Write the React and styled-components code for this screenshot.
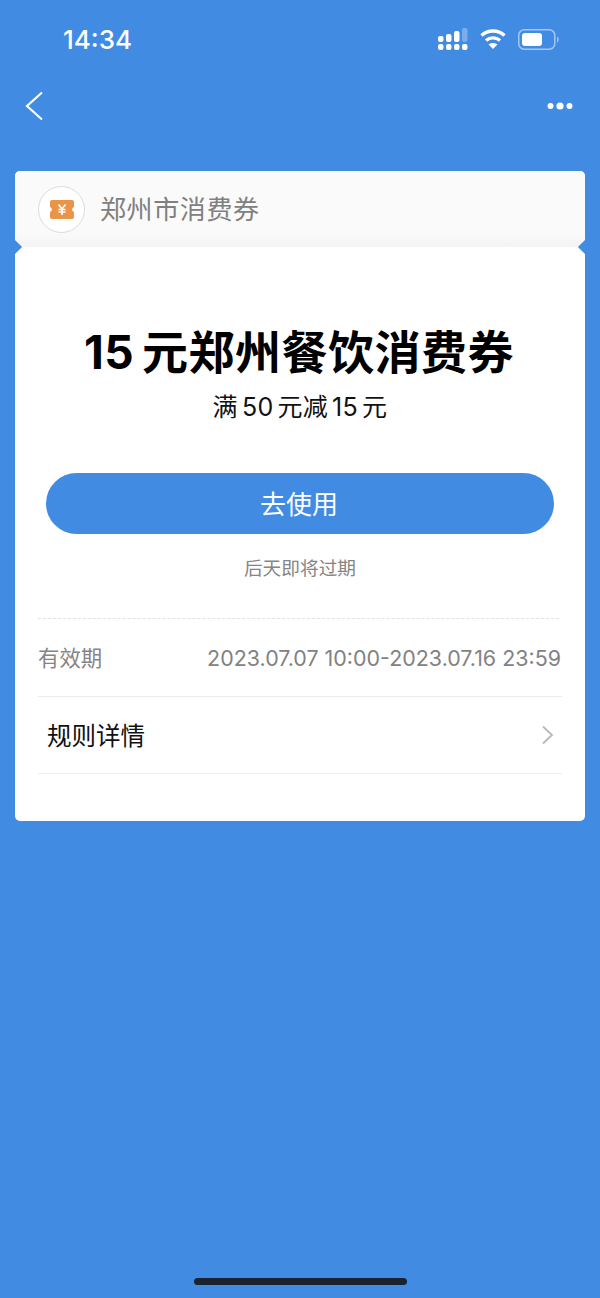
import styled, { createGlobalStyle } from "styled-components";

const GlobalStyle = createGlobalStyle`
  html, body {
    margin: 0;
    padding: 0;
    background: #418be3;
  }
  * {
    box-sizing: border-box;
  }
`;

const cjk = `"Noto Sans CJK SC", "Noto Sans", sans-serif`;
const latin = `Inter, "Noto Sans CJK SC", sans-serif`;

const Page = styled.div`
  position: relative;
  width: 600px;
  height: 1298px;
  overflow: hidden;
  background: #418be3;
  font-family: ${cjk};
`;

const StatusBar = styled.div`
  display: flex;
  align-items: center;
  justify-content: space-between;
  height: 78px;
  padding: 0 41px 0 63px;
`;

const Clock = styled.div`
  font-family: ${latin};
  font-size: 26px;
  font-weight: 500;
  color: #fff;
`;

const StatusIcons = styled.div`
  display: flex;
  align-items: center;
  gap: 12px;
`;

const NavBar = styled.div`
  display: flex;
  align-items: center;
  justify-content: space-between;
  height: 56px;
  padding: 0 27px 0 25px;
`;

const Card = styled.div`
  margin: 37px 15px 0;
  border-radius: 5px;
  overflow: visible;
  background: #fff;
`;

const CardHeader = styled.div`
  position: relative;
  display: flex;
  align-items: center;
  gap: 15px;
  height: 76px;
  padding: 0 23px;
  border-radius: 5px 5px 0 0;
  background: linear-gradient(#fafafa 80%, #f4f4f4);
`;

const Notch = styled.span`
  position: absolute;
  bottom: -5px;
  ${({ $side }) => $side}: -5px;
  width: 10px;
  height: 10px;
  background: #418be3;
  transform: rotate(45deg);
`;

const IssuerBadge = styled.div`
  display: flex;
  align-items: center;
  justify-content: center;
  width: 47px;
  height: 47px;
  border: 1px solid #dcdcdc;
  border-radius: 50%;
  background: #fff;
`;

const IssuerName = styled.div`
  padding-bottom: 2px;
  font-size: 26px;
  line-height: 1;
  color: #808080;
  letter-spacing: 0.6px;
`;

const CardBody = styled.div`
  padding: 0 23px 47px;
`;

const Headline = styled.h1`
  margin: 76px 0 0;
  padding-right: 2px;
  font-family: ${cjk};
  font-size: 46px;
  line-height: 52px;
  font-weight: 700;
  color: #000;
  letter-spacing: 0.5px;
  text-align: center;
  white-space: nowrap;
`;

const Subline = styled.div`
  margin-top: 9px;
  font-size: 25px;
  line-height: 36px;
  color: #111;
  letter-spacing: 0.3px;
  text-align: center;
`;

const Num = styled.span`
  font-family: ${latin};
  margin: 0 ${({ $after }) => $after}px 0 ${({ $before }) => $before}px;
`;

const UseButton = styled.button`
  display: block;
  width: 508px;
  height: 61px;
  margin: 48px 0 0 8px;
  padding: 0 2px 3px 0;
  border: 0;
  border-radius: 31px;
  background: #418be3;
  color: #fff;
  font-family: ${cjk};
  font-size: 26px;
`;

const ExpiryNote = styled.div`
  margin-top: 19px;
  font-size: 18.7px;
  line-height: 28px;
  color: #858585;
  text-align: center;
`;

const DashedRule = styled.div`
  margin-top: 37px;
  border-top: 1px dashed #e2e2e2;
  width: 521px;
`;

const InfoRow = styled.div`
  display: flex;
  align-items: center;
  justify-content: space-between;
  height: 78px;
  border-bottom: 1px solid #ececec;
`;

const InfoLabel = styled.div`
  padding-bottom: 2px;
  font-size: 21.4px;
  color: #858585;
`;

const InfoValue = styled.div`
  padding-right: 1px;
  font-family: ${latin};
  font-size: 21.45px;
  color: #828282;
  white-space: nowrap;
`;

const RuleRow = styled.div`
  display: flex;
  align-items: center;
  justify-content: space-between;
  height: 77px;
  padding: 0 7px 0 9px;
  border-bottom: 1px solid #efefef;
`;

const RuleLabel = styled.div`
  padding-bottom: 2px;
  font-size: 24.5px;
  color: #111;
`;

const HomeIndicator = styled.div`
  position: absolute;
  left: 194px;
  bottom: 13px;
  width: 213px;
  height: 7px;
  border-radius: 4px;
  background: #1a2430;
`;

const SignalIcon = () => (
  <svg width="30" height="22" viewBox="0 0 30 22">
    <g fill="#fff">
      <rect x="0" y="8" width="5.5" height="6" rx="2" />
      <rect x="8" y="6" width="5.5" height="8" rx="2" />
      <rect x="16" y="3" width="5.5" height="11" rx="2" />
      <rect x="0" y="16" width="5.5" height="6" rx="2" />
      <rect x="8" y="16" width="5.5" height="6" rx="2" />
      <rect x="16" y="16" width="5.5" height="6" rx="2" />
      <rect x="24" y="16" width="5.5" height="6" rx="2" />
    </g>
    <rect x="24" y="0" width="5.5" height="14" rx="2" fill="#79aeec" />
  </svg>
);

const WifiIcon = () => (
  <svg width="26" height="22" viewBox="0 0 26 22" fill="none" stroke="#fff" strokeWidth="3.4">
    <path d="M1.5 7.5C8 1.5 18 1.5 24.5 7.5" />
    <path d="M6 12.5C10 9 16 9 20 12.5" />
    <path d="M13 21l-4.4-4.6c2.5-2 6.3-2 8.8 0z" fill="#fff" stroke="none" />
  </svg>
);

const BatteryIcon = () => (
  <svg width="41" height="21" viewBox="0 0 41 21" fill="none">
    <rect x="0.75" y="0.75" width="36" height="19.5" rx="5.5" stroke="#a3c7f2" strokeWidth="1.5" />
    <rect x="4" y="4" width="20" height="13" rx="3" fill="#fff" />
    <path d="M39 7.5c1.2.5 1.6 1.6 1.6 3s-.4 2.5-1.6 3z" fill="#a3c7f2" />
  </svg>
);

const BackIcon = () => (
  <svg width="18" height="30" viewBox="0 0 18 30" fill="none">
    <path d="M17 1.5L2 15l15 13.5" stroke="#fff" strokeWidth="2.2" />
  </svg>
);

const MoreIcon = () => (
  <svg width="26" height="8" viewBox="0 0 26 8" fill="#fff">
    <circle cx="3.5" cy="4" r="3" />
    <circle cx="13" cy="4" r="3.6" />
    <circle cx="22.5" cy="4" r="3" />
  </svg>
);

const TicketIcon = () => (
  <svg width="24" height="19" viewBox="0 0 24 19">
    <path
      d="M2 0h20a2 2 0 0 1 2 2v5a2.6 2.6 0 0 0 0 5v5a2 2 0 0 1-2 2H2a2 2 0 0 1-2-2v-5a2.6 2.6 0 0 0 0-5V2a2 2 0 0 1 2-2z"
      fill="#e8954a"
    />
    <path
      d="M8.5 4.5L12 9l3.5-4.5M12 9v6M8.5 9.5h7M8.5 12h7"
      fill="none"
      stroke="#fff"
      strokeWidth="1.6"
    />
  </svg>
);

const ChevronIcon = () => (
  <svg width="14" height="20" viewBox="0 0 14 20" fill="none">
    <path d="M2 1.5L11 10l-9 8.5" stroke="#b8b8b8" strokeWidth="1.8" />
  </svg>
);

const App = () => (
  <Page>
    <GlobalStyle />
    <StatusBar>
      <Clock>14:34</Clock>
      <StatusIcons>
        <SignalIcon />
        <WifiIcon />
        <BatteryIcon />
      </StatusIcons>
    </StatusBar>
    <NavBar>
      <BackIcon />
      <MoreIcon />
    </NavBar>
    <Card>
      <CardHeader>
        <IssuerBadge>
          <TicketIcon />
        </IssuerBadge>
        <IssuerName>郑州市消费券</IssuerName>
        <Notch $side="left" />
        <Notch $side="right" />
      </CardHeader>
      <CardBody>
        <Headline>
          <Num $before={0} $after={8}>15</Num>元郑州餐饮消费券
        </Headline>
        <Subline>
          满<Num $before={4} $after={4}>50</Num>元减<Num $before={4} $after={4}>15</Num>元
        </Subline>
        <UseButton>去使用</UseButton>
        <ExpiryNote>后天即将过期</ExpiryNote>
        <DashedRule />
        <InfoRow>
          <InfoLabel>有效期</InfoLabel>
          <InfoValue>2023.07.07 10:00-2023.07.16 23:59</InfoValue>
        </InfoRow>
        <RuleRow>
          <RuleLabel>规则详情</RuleLabel>
          <ChevronIcon />
        </RuleRow>
      </CardBody>
    </Card>
    <HomeIndicator />
  </Page>
);

export default App;
